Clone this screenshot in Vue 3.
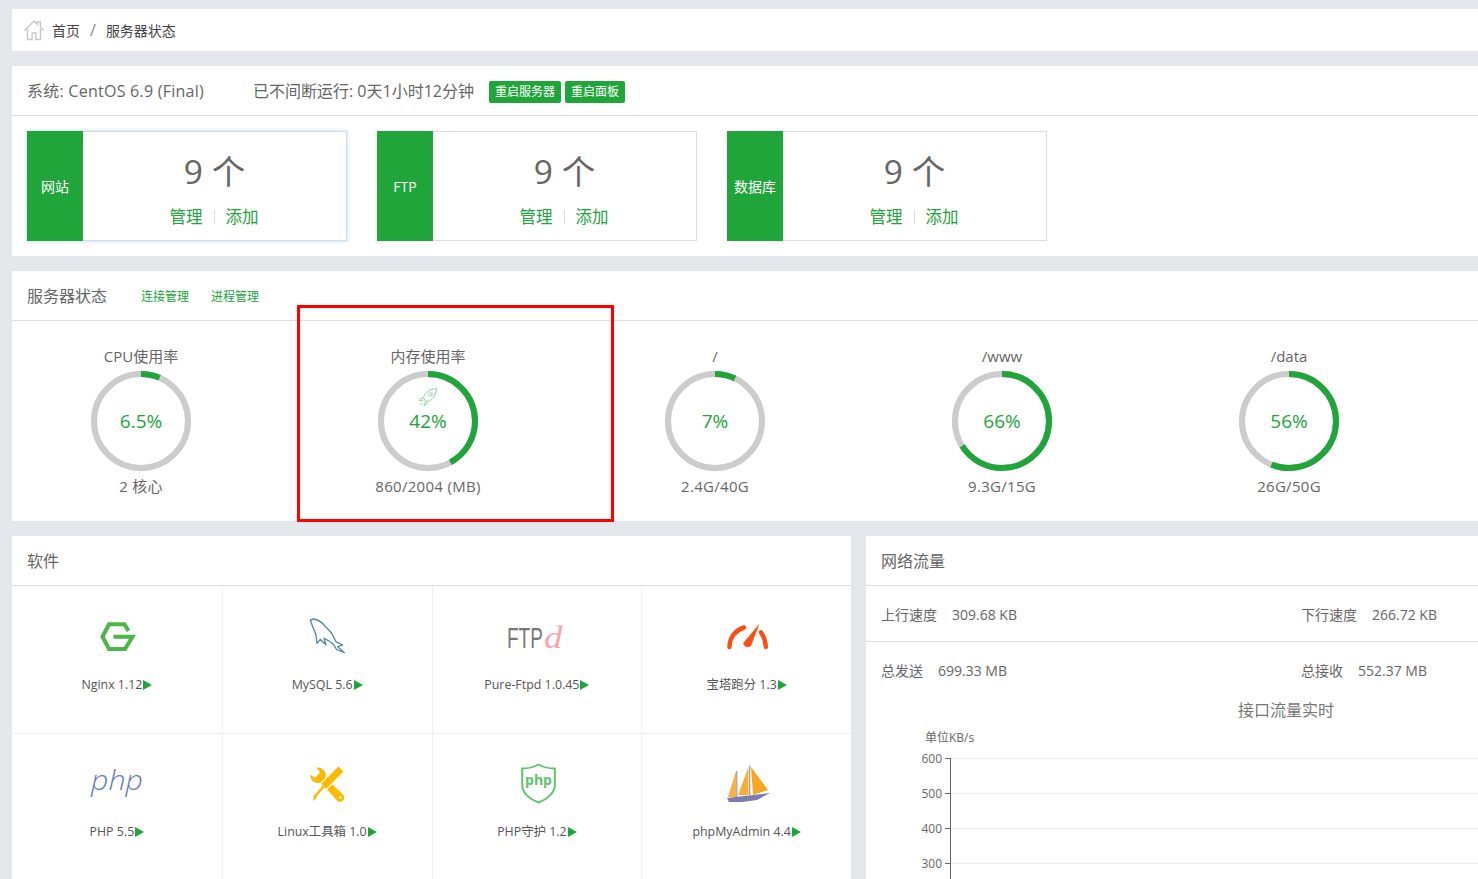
<template>
  <div class="page">
    <div class="crumbs">
      <svg class="home" viewBox="0 0 22 22" width="22" height="22">
        <path d="M1.5 11.5 11 2l3.500 3.500V3h3v5.500l3 3" fill="none" stroke="#c8c8c8" stroke-width="1.4" />
        <path d="M4.500 10v10.500h4.600v-6.500h3.800v6.500h4.600V10" fill="none" stroke="#c8c8c8" stroke-width="1.4" />
      </svg>
      <span class="crumb">首页</span>
      <span class="slash">/</span>
      <span class="crumb">服务器状态</span>
    </div>

    <section class="panel">
      <div class="head sys-head">
        <span class="sys-name">系统: CentOS 6.9 (Final)</span>
        <span class="uptime">已不间断运行: 0天1小时12分钟</span>
        <a class="btn">重启服务器</a>
        <a class="btn">重启面板</a>
      </div>
      <div class="cards">
        <div v-for="(card, i) in cards" :key="card" class="card" :class="{ hover: i === 0 }">
          <div class="card-name">{{ card }}</div>
          <div class="card-body">
            <div class="count">9 个</div>
            <div class="card-links"><a>管理</a><i></i><a>添加</a></div>
          </div>
        </div>
      </div>
    </section>

    <section class="panel">
      <div class="head status-head">
        <span class="title">服务器状态</span>
        <a class="tab first">连接管理</a>
        <a class="tab">进程管理</a>
      </div>
      <div class="rings">
        <div v-for="ring in rings" :key="ring.name" class="ring-col">
          <div class="ring-name">{{ ring.name }}</div>
          <div class="ring">
            <svg viewBox="0 0 100 100" width="100" height="100">
              <circle cx="50" cy="50" r="49.6" fill="none" stroke="#20a53a" stroke-width=".6" opacity=".35" />
              <circle cx="50" cy="50" r="47" fill="none" stroke="#ccc" stroke-width="6" />
              <circle cx="50" cy="50" r="47" fill="none" stroke="#20a53a" stroke-width="6"
                :stroke-dasharray="`${ring.pct * 2.953} 295.3`" transform="rotate(-90 50 50)" />
            </svg>
            <svg v-if="ring.rocket" class="rocket" viewBox="0 0 20 20" width="20" height="20">
              <g fill="none" stroke="#8ed49c" stroke-width="1" stroke-linejoin="round" stroke-linecap="round">
                <path d="M7 13 5.500 10.500C7.500 5 12 2 18.500 1.500 18 8 15 12.500 9.500 14.500Z" />
                <circle cx="12.500" cy="7.500" r="1.800" />
                <path d="M5.700 10.800 2.500 11.500 1.500 14 5 13M9.200 14.300 8.500 17.500 6 18.500 7 15" />
                <path d="M4 16 2.500 17.500" />
              </g>
            </svg>
            <span class="ring-pct">{{ ring.text }}</span>
          </div>
          <div class="ring-sub">{{ ring.sub }}</div>
        </div>
      </div>
    </section>

    <div class="bottom">
      <section class="panel soft">
        <div class="head"><span class="title">软件</span></div>
        <div class="soft-grid">
          <div v-for="item in software" :key="item.id" class="soft-cell">
            <svg class="soft-icon" :viewBox="item.box" width="60" height="40">
              <path v-if="item.id === 'nginx'" d="M113.500 636.700H132.500L125 649H109L102.500 636.700 109 624.300H124.500L128.500 631" fill="none" stroke="#4cb649" stroke-width="4" />
              <path v-else-if="item.id === 'mysql'" d="M309.300 620 313 619C317 620 320.500 622 323 625 327 629 330 632 331.700 635L335 641.700 341.700 645 336.700 646.700 343.300 652.700 335.500 649.500 333 645C330 641.500 326.500 640 323 638.300L325 645 319.300 639.300 316 643.300 315 635C314 632 313 629.500 311.700 626.700Z" fill="none" stroke="#55849f" stroke-width="1.300" stroke-linejoin="round" />
              <template v-else-if="item.id === 'ftp'">
                <text class="ftp-text" transform="translate(506 648) scale(.655 1)">FTP</text>
                <text class="ftp-d" transform="translate(543 648) scale(1.150 1)">d</text>
              </template>
              <g v-else-if="item.id === 'gauge'" fill="none" stroke="#f94f10" stroke-width="4.500" stroke-linecap="round">
                <path d="M728.500 647C728.500 637 735 630 743 627.500" />
                <path d="M760 632.500C762.500 636 764.500 641 764.800 647" />
                <path d="M742 643.500 758.500 623.500 750 646Q745 649 742 643.500Z" fill="#f94f10" stroke="none" />
              </g>
              <text v-else-if="item.id === 'php'" class="php-text" x="91" y="790" textLength="52" lengthAdjust="spacingAndGlyphs">php</text>
              <g v-else-if="item.id === 'tools'">
                <path d="M309.500 774.500 314 778 319 772.500 315.500 767.500C322 766.500 326 772 324.500 778L342 794.500A4 4 0 0 1 336 800.500L320 782.500C314 784 309 781 309.500 774.500Z" fill="#fdb900" />
                <circle cx="339.300" cy="797.500" r="1.300" fill="#fff" />
                <path d="M322 787 340 769" stroke="#fff" stroke-width="9.500" />
                <path d="M322.500 786.500 340 769" stroke="#fdb900" stroke-width="7" />
                <path d="M322.500 786.500 313 797.500" stroke="#fdb900" stroke-width="2.500" />
                <path d="M314 796 311 801 316 798Z" fill="#fdb900" />
              </g>
              <g v-else-if="item.id === 'guard'">
                <path d="M537.500 764.500C542 767 548 768.500 553.800 768.500V785C553.800 793 546 799.500 537.500 802.500 529 799.500 521.200 793 521.200 785V768.500C527 768.500 533 767 537.500 764.500Z" fill="none" stroke="#5fc46c" stroke-width="2" />
                <text class="guard-text" x="537.500" y="785" text-anchor="middle">php</text>
              </g>
              <g v-else-if="item.id === 'pma'">
                <path d="M735 771 727 797H735Z" fill="#f9b13f" />
                <path d="M747.500 767 737 795H747.500Z" fill="#f9ad36" />
                <path d="M750 767 767 790 752 795Z" fill="#f5a623" />
                <path d="M735.800 771V797M748.700 765.500V795" stroke="#9a9aa5" stroke-width="1.200" />
                <path d="M726 798 769 793 756 800 741 802H728Z" fill="#7c7cae" />
              </g>
            </svg>
            <div class="soft-name">{{ item.name }}<span class="arrow"></span></div>
          </div>
        </div>
      </section>

      <section class="panel net">
        <div class="head"><span class="title">网络流量</span></div>
        <div class="net-row line">
          <div><span class="net-key">上行速度</span>309.68 KB</div>
          <div><span class="net-key">下行速度</span>266.72 KB</div>
        </div>
        <div class="net-row">
          <div><span class="net-key">总发送</span>699.33 MB</div>
          <div><span class="net-key">总接收</span>552.37 MB</div>
        </div>
        <svg class="chart" viewBox="0 0 612 182" width="612" height="182">
          <text class="chart-title" x="420" y="19" text-anchor="middle">接口流量实时</text>
          <text class="chart-unit" x="59" y="45">单位KB/s</text>
          <g v-for="(tick, i) in ticks" :key="tick">
            <line x1="85" x2="612" :y1="61.500 + i * 35" :y2="61.500 + i * 35" stroke="#eee" />
            <line x1="79" x2="85" :y1="61.500 + i * 35" :y2="61.500 + i * 35" stroke="#666" />
            <text class="chart-tick" x="76" :y="66 + i * 35" text-anchor="end">{{ tick }}</text>
          </g>
          <line x1="84.500" x2="84.500" y1="61" y2="182" stroke="#666" />
        </svg>
      </section>
    </div>

    <div class="mark"></div>
  </div>
</template>

<script setup>
const cards = ['网站', 'FTP', '数据库']

const rings = [
  { name: 'CPU使用率', pct: 6.5, text: '6.5%', sub: '2 核心' },
  { name: '内存使用率', pct: 42, text: '42%', sub: '860/2004 (MB)', rocket: true },
  { name: '/', pct: 7, text: '7%', sub: '2.4G/40G' },
  { name: '/www', pct: 66, text: '66%', sub: '9.3G/15G' },
  { name: '/data', pct: 56, text: '56%', sub: '26G/50G' },
]

const software = [
  { id: 'nginx', name: 'Nginx 1.12', box: '87 616 60 40' },
  { id: 'mysql', name: 'MySQL 5.6', box: '296 616 60 40' },
  { id: 'ftp', name: 'Pure-Ftpd 1.0.45', box: '506 616 60 40' },
  { id: 'gauge', name: '宝塔跑分 1.3', box: '716 616 60 40' },
  { id: 'php', name: 'PHP 5.5', box: '87 763 60 40' },
  { id: 'tools', name: 'Linux工具箱 1.0', box: '296 763 60 40' },
  { id: 'guard', name: 'PHP守护 1.2', box: '506 763 60 40' },
  { id: 'pma', name: 'phpMyAdmin 4.4', box: '716 763 60 40' },
]

const ticks = [600, 500, 400, 300]
</script>

<style>
html,
body {
  margin: 0;
  height: 879px;
  overflow: hidden;
  background: #e4e8ed;
}
</style>

<style scoped>
.page {
  position: relative;
  box-sizing: border-box;
  width: 1478px;
  height: 879px;
  padding: 9px 0 0 12px;
  overflow: hidden;
  font-family: "Open Sans", "Noto Sans CJK SC", sans-serif;
  font-size: 14px;
  color: #666;
}

.crumbs {
  display: flex;
  align-items: center;
  box-sizing: border-box;
  height: 42px;
  margin-bottom: 15px;
  padding: 0 0 1px 11px;
  background: #fff;
  font-size: 14px;
  color: #444;
}

.home {
  margin-right: 7px;
}

.slash {
  margin: 0 10px;
  font-size: 16px;
  color: #888;
}

.panel {
  background: #fff;
  margin-bottom: 15px;
}

.head {
  display: flex;
  align-items: center;
  box-sizing: border-box;
  height: 50px;
  padding: 0 0 2px 15px;
  border-bottom: 1px solid #ddd;
  font-size: 16px;
}

.sys-name {
  width: 226px;
  letter-spacing: .25px;
}

.uptime {
  width: 236px;
}

.btn {
  margin: 5px 4px 0 0;
  padding: 0 6px;
  border-radius: 2px;
  background: #20a53a;
  color: #fff;
  font-size: 12px;
  line-height: 22px;
}

.cards {
  display: flex;
  gap: 30px;
  padding: 15px;
}

.card {
  display: flex;
  box-sizing: border-box;
  width: 320px;
  height: 110px;
  border: 1px solid #ddd;
  border-left: 0;
}

.card.hover {
  border-color: #cfdcea;
  box-shadow: 0 0 4px #bcd5ec;
}

.card-name {
  display: flex;
  align-items: center;
  justify-content: center;
  width: 56px;
  margin: -1px 0;
  background: #20a53a;
  color: #fff;
  font-size: 14px;
}

.card-body {
  flex: 1;
  text-align: center;
}

.count {
  margin-top: 15px;
  font-size: 33.500px;
  line-height: 48px;
  color: #666;
}

.card-links {
  display: flex;
  align-items: center;
  justify-content: center;
  margin-top: 10px;
  margin-right: 1px;
  font-size: 16.500px;
  line-height: 24px;
  color: #20a53a;
}

.card-links i {
  width: 1px;
  height: 14px;
  margin: 0 11px;
  background: #ddd;
}

.tab {
  margin: 2px 22px 0 0;
  font-size: 12px;
  color: #20a53a;
}

.tab.first {
  margin-left: 34px;
}

.rings {
  display: flex;
  gap: 29px;
  height: 200px;
}

.ring-col {
  width: 258px;
  text-align: center;
}

.ring-name {
  margin-top: 25px;
  font-size: 15px;
  line-height: 20px;
}

.ring {
  position: relative;
  width: 100px;
  height: 100px;
  margin: 5px auto 0;
}

.ring svg {
  display: block;
}

.ring .rocket {
  position: absolute;
  top: 16px;
  left: 40px;
}

.ring-pct {
  position: absolute;
  top: 35px;
  left: 0;
  right: 0;
  font-size: 19px;
  line-height: 30px;
  color: #20a53a;
}

.ring-sub {
  margin-top: 5px;
  font-size: 15px;
  letter-spacing: .3px;
  line-height: 20px;
}

.bottom {
  display: flex;
  gap: 15px;
}

.soft {
  width: 839px;
  flex: none;
}

.soft-grid {
  display: grid;
  grid-template-columns: repeat(4, 1fr);
}

.soft-cell {
  box-sizing: border-box;
  height: 148px;
  padding-top: 30px;
  border-left: 1px solid #eef;
  border-bottom: 1px solid #eef;
  text-align: center;
}

.soft-cell:nth-child(4n + 1) {
  border-left: 0;
}

.soft-cell:nth-child(n + 5) {
  padding-top: 29px;
}

.soft-icon {
  display: block;
  margin: 0 auto;
  overflow: visible;
}

.soft-name {
  margin-top: 19px;
  font-size: 12.400px;
  line-height: 20px;
  color: #555;
}

.arrow {
  display: inline-block;
  margin-left: 1px;
  border-left: 9px solid #20a53a;
  border-top: 5.500px solid transparent;
  border-bottom: 5.500px solid transparent;
  vertical-align: -1px;
}

.net {
  flex: 1;
}

.net-row {
  display: grid;
  grid-template-columns: 420px 1fr;
  align-items: center;
  height: 56px;
  box-sizing: border-box;
  padding-left: 15px;
}

.net-row:last-of-type {
  height: 55px;
}

.net-row.line {
  border-bottom: 1px solid #ddd;
}

.net-key {
  margin-right: 15px;
}

.chart {
  display: block;
}

.chart-title {
  font-size: 16px;
  fill: #777;
}

.chart-unit {
  font-size: 12px;
  fill: #666;
}

.chart-tick {
  font-size: 12px;
  fill: #666;
}

.ftp-text {
  font-family: "Liberation Sans", sans-serif;
  font-size: 29px;
  fill: #777;
}

.ftp-d {
  font-family: "Liberation Serif", serif;
  font-style: italic;
  font-size: 32px;
  fill: #f8a5a8;
}

.php-text {
  font-family: "Open Sans", sans-serif;
  font-style: italic;
  font-weight: 300;
  font-size: 27px;
  fill: #6a7db8;
}

.guard-text {
  font-family: "Open Sans", sans-serif;
  font-weight: 700;
  font-size: 14px;
  fill: #5fc46c;
}

.mark {
  position: absolute;
  left: 297px;
  top: 305px;
  width: 311px;
  height: 211px;
  border: 3px solid #f00;
}
</style>
